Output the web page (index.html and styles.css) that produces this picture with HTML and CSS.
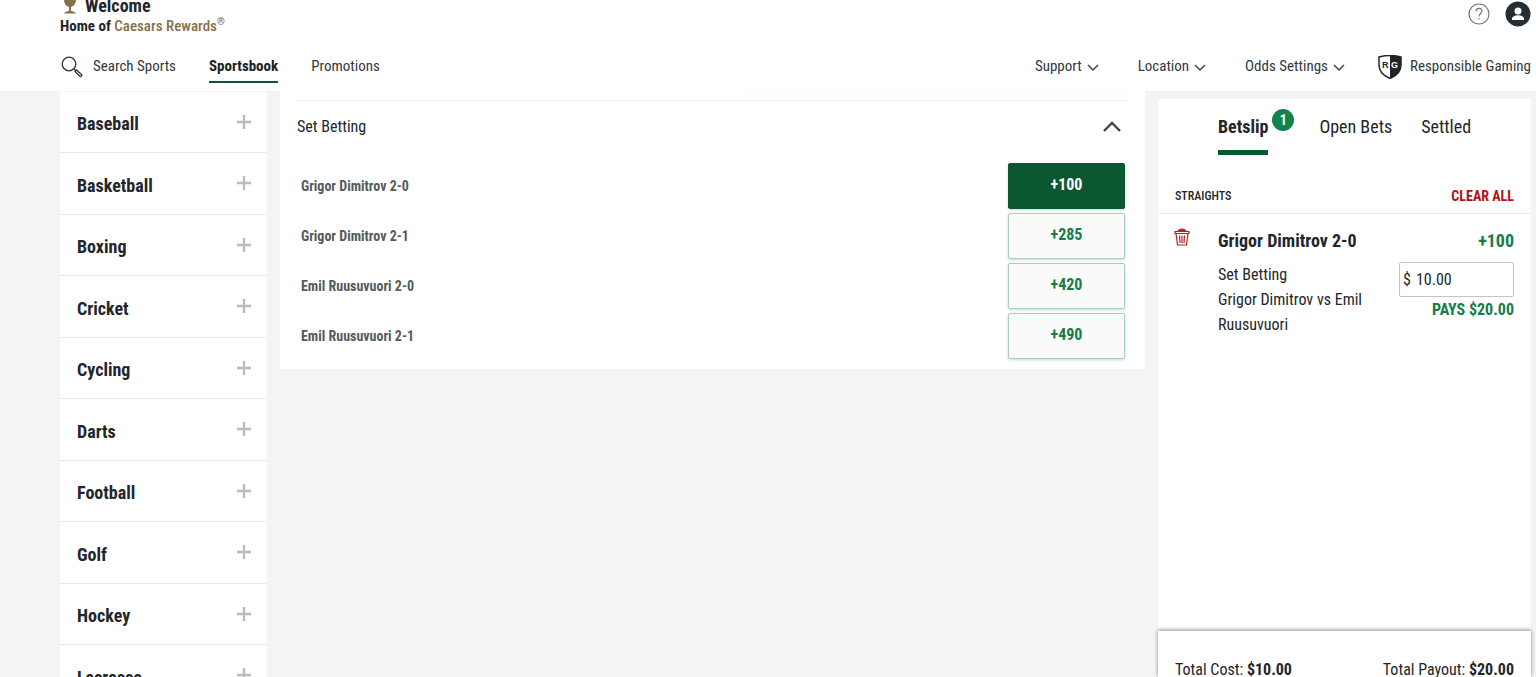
FILE: index.html
```
<!DOCTYPE html>
<html lang="en">
<head>
	<meta charset="UTF-8">
	<meta name="viewport" content="width=device-width, initial-scale=1.0">
	<title>Sportsbook</title>
	<link rel="stylesheet" href="styles.css">
</head>
<body>
	<header class="header">
		<div class="top-row">
			<div class="brand">
				<div class="welcome">
					<svg width="20" height="28" viewBox="0 0 20 28" fill="#85704a"><path d="M4 0h12v12c0 5-2 7-5 8v4c2 0 4 1 5 2.500H4c1-1.500 3-2.500 5-2.500v-4c-3-1-5-3-5-8z"/></svg>
					<strong>Welcome</strong>
				</div>
				<div class="tagline">Home of <span>Caesars Rewards<sup>®</sup></span></div>
			</div>
			<div class="account">
				<button class="icon-button" aria-label="Help">
					<svg width="22" height="22" viewBox="0 0 22 22" fill="none" stroke="#777" stroke-width="1.200"><circle cx="11" cy="11" r="10"/><path d="M8 8.500c0-4 6-4 6-.5 0 2.500-3 2.500-3 5.500"/><path d="M11 15v1.500"/></svg>
				</button>
				<button class="icon-button" aria-label="Account">
					<svg width="26" height="26" viewBox="0 0 26 26"><circle cx="13" cy="13" r="12.500" fill="#252d36"/><circle cx="13" cy="10" r="3.500" fill="#fff"/><path d="M7 19v-1c0-5 12-5 12 0v1z" fill="#fff"/></svg>
				</button>
			</div>
		</div>
		<nav class="nav">
			<button class="nav-item search">
				<svg width="22" height="22" viewBox="0 0 22 22" fill="none" stroke="#333" stroke-width="1.300"><circle cx="8" cy="8" r="6.800"/><path d="M13 13l1.500 1.500"/><path d="M14 15.500l1.500-1.500 5 4.500c1 1-.7 2.700-1.700 1.700z"/></svg>
				Search Sports
			</button>
			<a class="nav-item active" href="#sportsbook">Sportsbook</a>
			<a class="nav-item" href="#promotions">Promotions</a>
			<div class="nav-right">
				<button class="nav-item">Support <svg class="chevron" viewBox="0 0 12 12"><path d="M1 4l5 5 5-5"/></svg></button>
				<button class="nav-item">Location <svg class="chevron" viewBox="0 0 12 12"><path d="M1 4l5 5 5-5"/></svg></button>
				<button class="nav-item">Odds Settings <svg class="chevron" viewBox="0 0 12 12"><path d="M1 4l5 5 5-5"/></svg></button>
				<a class="nav-item responsible" href="#responsible">
					<svg width="24" height="24" viewBox="0 0 24 24"><path d="M1 2Q12-1 23 2v8q0 9-11 13.500Q1 19 1 10z" fill="#fff" stroke="#20252a" stroke-width="1.500"/><path d="M12 .5q6 0 11 1.500v8q0 9-11 13.500z" fill="#20252a"/><text x="4" y="13" class="shield-text">R</text><text x="13" y="13" class="shield-text light">G</text></svg>
					Responsible Gaming
				</a>
			</div>
		</nav>
	</header>

	<div class="layout">
		<aside>
			<ul class="sports">
				<li><button>Baseball <svg class="plus" viewBox="0 0 16 16"><path d="M8 1v14M1 8h14"/></svg></button></li>
				<li><button>Basketball <svg class="plus" viewBox="0 0 16 16"><path d="M8 1v14M1 8h14"/></svg></button></li>
				<li><button>Boxing <svg class="plus" viewBox="0 0 16 16"><path d="M8 1v14M1 8h14"/></svg></button></li>
				<li><button>Cricket <svg class="plus" viewBox="0 0 16 16"><path d="M8 1v14M1 8h14"/></svg></button></li>
				<li><button>Cycling <svg class="plus" viewBox="0 0 16 16"><path d="M8 1v14M1 8h14"/></svg></button></li>
				<li><button>Darts <svg class="plus" viewBox="0 0 16 16"><path d="M8 1v14M1 8h14"/></svg></button></li>
				<li><button>Football <svg class="plus" viewBox="0 0 16 16"><path d="M8 1v14M1 8h14"/></svg></button></li>
				<li><button>Golf <svg class="plus" viewBox="0 0 16 16"><path d="M8 1v14M1 8h14"/></svg></button></li>
				<li><button>Hockey <svg class="plus" viewBox="0 0 16 16"><path d="M8 1v14M1 8h14"/></svg></button></li>
				<li><button>Lacrosse <svg class="plus" viewBox="0 0 16 16"><path d="M8 1v14M1 8h14"/></svg></button></li>
			</ul>
		</aside>

		<main class="market">
			<div class="previous-odds"><span></span><span></span><span></span></div>
			<button class="market-title">
				Set Betting
				<svg width="18" height="12" viewBox="0 0 18 12" fill="none" stroke="#444" stroke-width="2.400"><path d="M1 11l8-8 8 8"/></svg>
			</button>
			<div class="selections">
				<div class="selection"><span>Grigor Dimitrov 2-0</span><button class="odds selected">+100</button></div>
				<div class="selection"><span>Grigor Dimitrov 2-1</span><button class="odds">+285</button></div>
				<div class="selection"><span>Emil Ruusuvuori 2-0</span><button class="odds">+420</button></div>
				<div class="selection"><span>Emil Ruusuvuori 2-1</span><button class="odds">+490</button></div>
			</div>
		</main>

		<aside class="betslip">
			<div class="tabs">
				<button class="tab active">Betslip<span class="badge">1</span></button>
				<button class="tab">Open Bets</button>
				<button class="tab">Settled</button>
			</div>
			<div class="slip-heading">
				<span class="bet-type">STRAIGHTS</span>
				<button class="clear">CLEAR ALL</button>
			</div>
			<div class="bet">
				<button class="icon-button trash" aria-label="Remove bet">
					<svg width="16" height="18" viewBox="0 0 16 18" fill="none" stroke="#b51f24" stroke-width="1.200"><path d="M1 3.500h14v2H1z"/><path d="M4 3.500Q5 1 8 1t4 2.500z" fill="#b51f24"/><path d="M2 5.500l1.500 11.500h9L14 5.500M5.500 7.500l.5 7.500M8 7.500V15M10.500 7.500L10 15"/></svg>
				</button>
				<div class="bet-info">
					<strong>Grigor Dimitrov 2-0</strong>
					<p>Set Betting<br>Grigor Dimitrov vs Emil Ruusuvuori</p>
				</div>
				<div class="bet-stake">
					<strong class="price">+100</strong>
					<label class="stake">$ <input type="text" value="10.00" aria-label="Stake"></label>
					<strong class="pays">PAYS $20.00</strong>
				</div>
			</div>
			<div class="totals">
				<span>Total Cost: <strong>$10.00</strong></span>
				<span>Total Payout: <strong>$20.00</strong></span>
			</div>
		</aside>
	</div>
</body>
</html>
```
FILE: styles.css
```
* {
	box-sizing: border-box;
}
body {
	display: flex;
	flex-direction: column;
	height: 100vh;
	margin: 0;
	overflow: hidden;
	background: #f4f4f4;
	color: #22262a;
	font-family: "Roboto Condensed", "Liberation Sans Narrow", Roboto, sans-serif;
	font-size: 16px;
	line-height: 25px;
}
button, input {
	padding: 0;
	border: 0;
	background: none;
	color: inherit;
	font: inherit;
	cursor: pointer;
}
svg {
	flex: none;
}

/* Header */
.header {
	display: flex;
	flex-direction: column;
	justify-content: flex-end;
	flex: none;
	height: 91px;
	padding: 0 5px 8px 60px;
	overflow: hidden;
	background: #fff;
}
.top-row, .nav, .nav-right, .account, .welcome, .nav-item {
	display: flex;
	align-items: center;
}
.top-row {
	justify-content: space-between;
	align-items: flex-end;
	padding-bottom: 14px;
}
.welcome {
	gap: 5px;
	height: 20px;
	font-size: 18px;
}
.welcome svg {
	margin-bottom: 8px;
}
.tagline {
	font-size: 15px;
	font-weight: bold;
	line-height: 22px;
}
.tagline span {
	color: #85704a;
	font-weight: 500;
}
.tagline sup {
	font-size: 10px;
	line-height: 0;
}
.account {
	gap: 15px;
	padding-bottom: 10px;
}
.icon-button {
	display: flex;
}
.nav {
	gap: 33px;
}
.nav-item {
	height: 32px;
	gap: 5px;
	padding-bottom: 1px;
	border-top: 2px solid transparent;
	border-bottom: 2px solid transparent;
	color: #33373a;
	font-size: 15px;
	text-decoration: none;
	white-space: nowrap;
}
.nav-item.active {
	border-bottom-color: #0b5730;
	color: #1c2022;
	font-weight: bold;
}
.search {
	gap: 10px;
	padding-left: 1px;
}
.nav-right {
	gap: 39px;
	margin-left: auto;
}
.responsible {
	gap: 8px;
	margin-left: -6px;
}
.chevron {
	width: 12px;
	height: 12px;
	fill: none;
	stroke: #444;
	stroke-width: 1.5;
}
.shield-text {
	font: bold 9px "Liberation Sans", sans-serif;
	fill: #20252a;
}
.shield-text.light {
	fill: #fff;
}

/* Three column layout */
.layout {
	display: grid;
	grid-template-columns: 207px 1fr 373px;
	grid-template-rows: minmax(0, 1fr);
	gap: 13px;
	flex: 1;
	min-height: 0;
	padding: 0 5px 0 60px;
}

/* Sports list */
.sports {
	margin: 1px 0 0;
	padding: 0;
	list-style: none;
	background: #fff;
}
.sports li {
	height: 61px;
	border-bottom: 1px solid #e9e9e9;
}
.sports li:nth-child(even) {
	height: 62px;
}
.sports button {
	display: flex;
	justify-content: space-between;
	align-items: center;
	width: 100%;
	height: 100%;
	padding: 3px 15px 0 17px;
	font-size: 18px;
	font-weight: bold;
}
.plus {
	width: 16px;
	height: 16px;
	margin-bottom: 4px;
	stroke: #b9bdc0;
	stroke-width: 2.4;
}

/* Market */
.market {
	align-self: start;
	padding: 0 17px 10px;
	background: #fff;
}
.previous-odds {
	display: flex;
	justify-content: flex-end;
	gap: 6px;
	height: 10px;
	border-bottom: 1px solid #efefef;
}
.previous-odds span {
	width: 124px;
	height: 1px;
	background: #f8f8f8;
}
.market-title {
	display: flex;
	justify-content: space-between;
	align-items: center;
	width: 100%;
	height: 50px;
	padding-right: 7px;
}
.selections {
	display: grid;
	gap: 4px;
	padding: 12px 3px 0 4px;
}
.selection {
	display: flex;
	justify-content: space-between;
	align-items: center;
	color: #555a5c;
	font-size: 14px;
	font-weight: bold;
}
.odds {
	width: 117px;
	height: 46px;
	padding-bottom: 3px;
	border: 1px solid #a9ceb9;
	border-radius: 2px;
	background: #fafafa;
	box-shadow: 0 1px 3px #c9d8d0;
	color: #167c49;
	font-size: 16px;
	font-weight: bold;
}
.odds.selected {
	border-color: #0b5730;
	background: #0b5730;
	color: #fff;
}

/* Betslip */
.betslip {
	display: flex;
	flex-direction: column;
	margin-top: 8px;
	background: #fff;
}
.tabs {
	display: flex;
	gap: 29px;
	height: 56px;
	padding-left: 60px;
	font-size: 18px;
}
.tab {
	position: relative;
	padding-top: 4px;
	border-bottom: 5px solid transparent;
}
.tab.active {
	margin-right: 22px;
	border-bottom-color: #0b5730;
	font-weight: bold;
}
.badge {
	position: absolute;
	top: 10px;
	left: calc(100% + 4px);
	width: 22px;
	border-radius: 50%;
	background: #12834d;
	color: #fff;
	font-size: 14px;
	line-height: 22px;
}
.slip-heading {
	display: flex;
	justify-content: space-between;
	align-items: flex-end;
	height: 59px;
	padding: 0 17px 4px;
	border-bottom: 1px solid #e9e9e9;
	font-size: 14px;
}
.bet-type {
	font-size: 12px;
	font-weight: 500;
}
.clear {
	color: #b01116;
	font-weight: bold;
}
.bet {
	display: flex;
	flex: 1;
	padding: 14px 17px 0 16px;
}
.trash {
	align-self: flex-start;
	width: 44px;
}
.bet-info {
	flex: 1;
}
.bet-info strong, .price {
	display: block;
	font-size: 18px;
	line-height: 25px;
}
.bet-info p {
	width: 150px;
	margin: 9px 0 0;
}
.bet-stake {
	text-align: right;
}
.price, .pays {
	color: #167c49;
}
.stake {
	display: flex;
	align-items: center;
	gap: 5px;
	width: 115px;
	height: 35px;
	margin-top: 9px;
	padding: 0 3px;
	border: 1px solid #c4c4c4;
	border-radius: 2px;
}
.stake input {
	width: 100%;
	cursor: text;
}
.totals {
	display: flex;
	justify-content: space-between;
	height: 46px;
	padding: 26px 17px 0;
	box-shadow: 0 -1px 4px #888;
}
```
